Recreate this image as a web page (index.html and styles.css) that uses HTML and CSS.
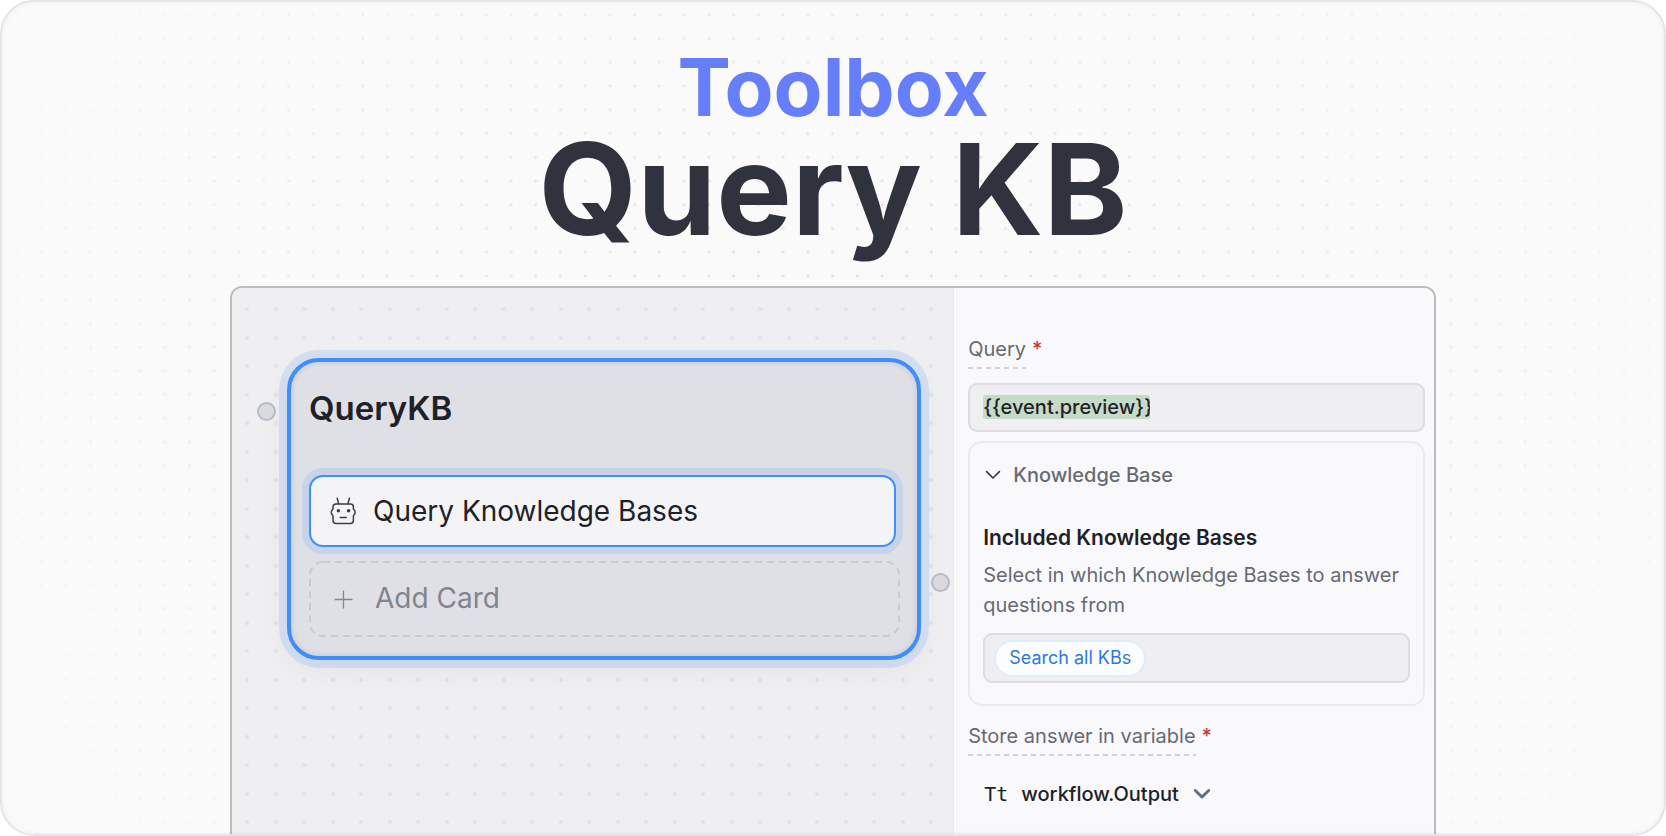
FILE: index.html
```html
<!DOCTYPE html>
<html lang="en">
<head>
<meta charset="utf-8">
<meta name="viewport" content="width=device-width, initial-scale=1">
<title>Toolbox – Query KB</title>
<link rel="stylesheet" href="styles.css">
</head>
<body>
<main class="frame">
  <header class="hero">
    <p class="hero-kicker">Toolbox</p>
    <h1 class="hero-title">Query KB</h1>
  </header>

  <section class="studio">
    <div class="canvas">
      <article class="node">
        <span class="port port-in"></span>
        <span class="port port-out"></span>
        <h2 class="node-title">QueryKB</h2>
        <button class="card card-selected" type="button">
          <svg class="card-icon" viewBox="0 0 28 28" fill="none" stroke="#3a3d42" stroke-width="1.5" stroke-linecap="round" stroke-linejoin="round" aria-hidden="true">
            <path d="M8.2 1.2 9.6 6.6M20.4 1.2 19 6.6"/>
            <path d="M7 7h14.4q3 0 3 3v1.4q0 1 .8 1.6.9.8.9 2.2 0 1.6-.8 2.4-.9.8-.9 1.8v4.2q0 3-3 3H7q-3 0-3-3v-4.2q0-1-.9-1.8-.8-.8-.8-2.4 0-1.400.9-2.200Q4 12.400 4 11.400V10q0-3 3-3z"/>
            <path d="M11.200 20.500h6"/>
            <circle cx="9.400" cy="13.800" r="1" fill="#3a3d42"/>
            <circle cx="19.600" cy="13.800" r="1" fill="#3a3d42"/>
          </svg>
          <span>Query Knowledge Bases</span>
        </button>
        <button class="card card-add" type="button">
          <svg class="card-outline" aria-hidden="true"><rect x="1" y="1" rx="13"/></svg>
          <svg class="card-icon" viewBox="0 0 28 28" fill="none" stroke="#84858d" stroke-width="1.3" aria-hidden="true">
            <path d="M14.500 6.500v18M5.500 15.500h18"/>
          </svg>
          <span>Add Card</span>
        </button>
      </article>
    </div>

    <form class="inspector">
      <div class="label-row">
        <label class="label" for="query">Query</label><span class="required">*</span>
      </div>
      <div class="field">
        <input class="token" id="query" type="text" value="{{event.preview}}">
      </div>

      <section class="group">
        <button class="group-toggle" type="button" aria-expanded="true">
          <svg class="group-chevron" viewBox="0 0 16 10" fill="none" stroke="#33363b" stroke-width="1.600" stroke-linecap="round" stroke-linejoin="round" aria-hidden="true"><path d="M1.600 1.600 8 8l6.400-6.400"/></svg>
          <span>Knowledge Base</span>
        </button>
        <h3 class="group-title">Included Knowledge Bases</h3>
        <p class="group-text">Select in which Knowledge Bases to answer questions from</p>
        <div class="field field-chips">
          <button class="chip" type="button">Search all KBs</button>
        </div>
      </section>

      <div class="label-row label-row-output">
        <label class="label" for="output">Store answer in variable</label><span class="required">*</span>
      </div>
      <div class="variable">
        <span class="variable-type">Tt</span>
        <select class="variable-select" id="output"><option>workflow.Output</option></select>
        <svg class="variable-chevron" viewBox="0 0 18 12" fill="none" stroke="#60707f" stroke-width="3" stroke-linecap="round" stroke-linejoin="round" aria-hidden="true"><path d="M2.300 2.500 9 9l6.700-6.500"/></svg>
      </div>
    </form>
  </section>
</main>
</body>
</html>
```
FILE: styles.css
```css
*,
*::before,
*::after {
  box-sizing: border-box;
}

body {
  margin: 0;
  background: #fff;
  font-family: Inter, "Liberation Sans", sans-serif;
  color: #1e2126;
}

h1, h2, h3, p {
  margin: 0;
}

button, input, select {
  margin: 0;
  padding: 0;
  border: 0;
  background: none;
  color: inherit;
  font: inherit;
  text-align: left;
}

.frame {
  position: relative;
  display: flex;
  flex-direction: column;
  min-height: 100vh;
  border: 2px solid #e4e4ea;
  border-radius: 34px;
  background: #fafafa;
  overflow: hidden;
}

/* dotted backdrop, 67 by 35 dots, fading towards the corners */
.frame::before {
  content: "";
  position: absolute;
  inset: 1px 2px 0;
  background: radial-gradient(circle, #dcdcde 1px, transparent 2px) 0 0 / calc(100% / 67) calc(100% / 35);
  -webkit-mask-image: radial-gradient(ellipse 60% 95%, #000, transparent);
  mask-image: radial-gradient(ellipse 60% 95%, #000, transparent);
}

/* soft inner edge over all content */
.frame::after {
  content: "";
  position: absolute;
  inset: 0;
  border-radius: 32px;
  box-shadow: inset 0 0 5px rgba(30, 30, 60, 0.06);
  pointer-events: none;
}

.hero {
  position: relative;
  padding: 45px 0 34px;
  text-align: center;
  font-weight: 700;
}

.hero-kicker {
  font-size: 80px;
  line-height: 80px;
  color: #667ef9;
}

.hero-title {
  font-size: 127px;
  line-height: 125px;
  color: #30323e;
}

.studio {
  position: relative;
  flex: 1;
  display: grid;
  grid-template-columns: 60% 1fr;
  margin: 0 228px;
  border: 2px solid #bbbcbe;
  border-bottom: 0;
  border-radius: 12px 12px 0 0;
  overflow: hidden;
}

.canvas {
  padding: 70px 32px 70px 55px;
  background:
    radial-gradient(circle at 15px 14px, #e1e1e8 1px, transparent 3px) 0 7px / 57px 57px,
    radial-gradient(circle at 44px 14px, #e1e1e8 1px, transparent 3px) 0 7px / 57px 57px,
    radial-gradient(circle at 15px 43px, #e1e1e8 1px, transparent 3px) 0 7px / 57px 57px,
    radial-gradient(circle at 44px 43px, #e1e1e8 1px, transparent 3px) 0 7px / 57px 57px,
    #efeff1;
}

.node {
  position: relative;
  display: flex;
  flex-direction: column;
  padding: 26px 17px 19px 18px;
  border: 4px solid #3e8ffb;
  border-radius: 32px;
  background: #dfe0e5;
  box-shadow:
    0 0 0 8px rgba(62, 143, 251, 0.15),
    0 10px 28px 4px rgba(0, 0, 30, 0.04),
    inset 0 0 6px rgba(0, 0, 40, 0.12);
}

.node-title {
  margin-bottom: 47px;
  font-size: 33px;
  line-height: 40px;
  font-weight: 600;
}

.port {
  position: absolute;
  width: 19px;
  height: 19px;
  border: 2px solid #b9bbc6;
  border-radius: 50%;
  background: #d9d9e0;
}

.port-in {
  left: -34px;
  top: 40px;
}

.port-out {
  right: -33px;
  bottom: 64px;
}

.card {
  display: flex;
  align-items: center;
  gap: 16px;
  font-size: 28px;
  line-height: 36px;
}

.card-icon {
  width: 28px;
  height: 28px;
}

.card-selected {
  height: 72px;
  margin-right: 4px;
  padding-left: 18px;
  border: 2px solid #3e8ffb;
  border-radius: 14px;
  background: #f4f4f7;
  box-shadow: 0 0 0 7px rgba(62, 143, 251, 0.15);
}

.card-add {
  position: relative;
  gap: 18px;
  height: 76px;
  margin-top: 14px;
  padding: 0 0 2px 20px;
  color: #83848e;
}

.card-outline {
  position: absolute;
  inset: 0;
  width: 100%;
  height: 100%;
}

.card-outline rect {
  width: calc(100% - 2px);
  height: calc(100% - 2px);
  fill: none;
  stroke: #c9cace;
  stroke-width: 2;
  stroke-dasharray: 7 5;
}

.inspector {
  padding: 49px 9px 20px 14px;
  border-left: 1px solid #e8e8ec;
  background: #f9f9fb;
  font-size: 20px;
  line-height: 24px;
}

.label-row {
  display: flex;
  align-items: flex-start;
  gap: 6px;
  margin-bottom: 14px;
}

.label {
  padding-bottom: 8px;
  background: repeating-linear-gradient(90deg, #d2d3da 0 5px, transparent 5px 9px) 0 100% / 100% 2px no-repeat;
  color: #676a72;
}

.required {
  color: #ca3a37;
  font-weight: 500;
}

.field {
  display: flex;
  align-items: center;
  height: 49px;
  padding: 0 0 2px 13px;
  border: 2px solid #dcdce2;
  border-radius: 9px;
  background: #efeff1;
}

.token {
  width: 167px;
  field-sizing: content;
  height: 24px;
  border-radius: 3px;
  background: #c5dac7;
  font-weight: 500;
}

.group {
  margin-top: 9px;
  padding: 20px 13px 21px;
  border: 2px solid #ebebef;
  border-radius: 14px;
}

.group-toggle {
  display: flex;
  align-items: center;
  gap: 12px;
  padding-left: 2px;
  color: #676a72;
  font-weight: 500;
}

.group-chevron {
  width: 16px;
  height: 10px;
}

.group-title {
  margin-top: 37px;
  font-size: 21px;
  line-height: 28px;
  font-weight: 600;
}

.group-text {
  margin: 8px 0 13px;
  line-height: 30px;
  color: #676a72;
}

.field-chips {
  height: 50px;
  padding: 0 0 0 9px;
}

.chip {
  height: 37px;
  padding: 0 13px;
  border: 2px solid #dceefd;
  border-radius: 19px;
  background: #fcfdff;
  color: #2f78dc;
  font-size: 18px;
}

.label-row-output {
  margin-top: 18px;
  margin-bottom: 24px;
}

.variable {
  display: flex;
  align-items: center;
  padding-left: 16px;
}

.variable-type {
  margin-right: 13px;
  font-family: "DejaVu Sans Mono", monospace;
  line-height: 28px;
}

.variable-select {
  appearance: none;
  width: 190px;
  height: 28px;
  margin-right: -18px;
  font-weight: 500;
}

.variable-chevron {
  width: 18px;
  height: 12px;
  pointer-events: none;
}
```
